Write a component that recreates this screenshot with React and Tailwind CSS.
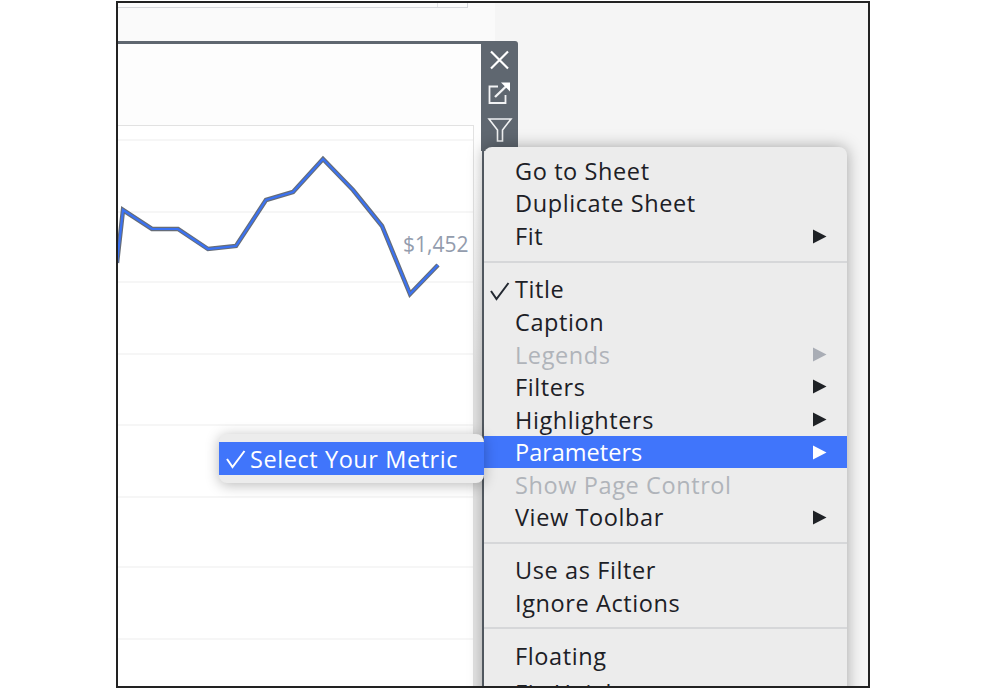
const pts = [[117,263],[123,210],[152,229],[178,229],[208,249],[236,246],[266,200],[293,192],[323,159],[353,190],[382,226],[410,294],[438,265]];
const line = pts.map(([x,y]) => `${x-118},${y-126}`).join(" ");
const grids = [140,212,282,354,425,497,567,639];

function Arrow({ color }) {
  return (
    <svg width="15" height="15" viewBox="0 0 15 15" className="shrink-0">
      <path d="M1 0.5 L14.5 7.5 L1 14.5 Z" fill={color} />
    </svg>
  );
}

function Check({ color = "#222831" }) {
  return (
    <svg width="22" height="20" viewBox="0 0 22 20" fill="none">
      <path d="M2 10 L7.5 18 L19.5 2" stroke={color} strokeWidth="2" />
    </svg>
  );
}

function Row({ label, arrow, checked, disabled, active, top = "pt-[2px]", spacing = "tracking-[0.6px]" }) {
  const tone = active ? "text-white" : disabled ? "text-[#b0b4ba]" : "text-[#1c2026]";
  const arrowColor = active ? "#ffffff" : disabled ? "#a9adb5" : "#1f2226";
  return (
    <div className={`relative flex h-[32.6px] items-center pl-[31px] pr-[20px] ${active ? "bg-[#4075fb]" : ""}`}>
      {checked && <span className="absolute left-[5px] top-[8px]"><Check /></span>}
      <span className={`flex-1 text-[23.5px] leading-none ${top} ${spacing} ${tone}`}>{label}</span>
      {arrow && <Arrow color={arrowColor} />}
    </div>
  );
}

function Sep({ after = "pb-[10px]" }) {
  return (
    <div className={`pt-[8px] ${after}`}>
      <div className="h-[2px] bg-[#d6d7d9]" />
    </div>
  );
}

export default function App() {
  return (
    <div className="h-[693px] w-[990px] overflow-hidden bg-white pl-[116px] pt-[1px] font-['Open_Sans',sans-serif]">
      <div className="relative flex h-[687px] w-[754px] overflow-hidden border-2 border-[#222222] bg-[#f5f5f5]">
        <div className="w-[377px] bg-[#fafafa]">
          <div className="flex h-[5px] w-[350px] justify-end border-b border-r border-[#d5d7db] bg-[#fcfcfc]">
            <div className="w-[30px] border-l border-[#e3e4e6]" />
          </div>
        </div>

        <div className="absolute left-0 top-[38px] flex h-[650px] w-[366px] flex-col border-r-2 border-t-[3px] border-[#5f6770] bg-linear-to-b from-[#fdfdfd] from-20% to-[#e4e4e4] to-50%">
          <div className="relative mr-[8px] mt-[81px] flex-1 border-r border-t border-[#e2e2e2] bg-white">
            <svg width="355" height="570" viewBox="0 0 355 570" className="block">
              {grids.map((y) => (
                <line key={y} x1="0" x2="355" y1={y-126} y2={y-126} stroke="#f3f3f3" strokeWidth="1.5" />
              ))}
              <polyline points={line} fill="none" stroke="#666d78" strokeWidth="4.5" strokeLinejoin="miter" />
              <polyline points={line} fill="none" stroke="#3b72f2" strokeWidth="2.2" strokeLinejoin="miter" />
            </svg>
            <span className="absolute left-[285px] top-[105px] text-[21px] leading-[26px] text-[#939cad]">$1,452</span>
          </div>
        </div>

        <div className="absolute left-[363px] top-[38px] flex h-[110px] w-[37px] flex-col items-center rounded-tr-[3px] bg-[#5f6770] pt-[7px]">
          <svg width="24" height="24" viewBox="0 0 24 24" fill="none" stroke="#ffffff" strokeWidth="2.2" className="-ml-[2px]">
            <path d="M4 3.5 L21 20.5 M21 3.5 L4 20.5" />
          </svg>
          <svg width="24" height="24" viewBox="0 0 24 24" fill="none" stroke="#f2f3f4" strokeWidth="1.8" className="-ml-[2px] mt-[9px]">
            <path d="M11 5.5 H2.5 V22 H18.5 V14" />
            <path d="M8 16 L20 4.5" strokeWidth="2.4" />
            <path d="M14 1.5 H23 V10.5 Z" fill="#ffffff" stroke="none" />
          </svg>
          <svg width="26" height="26" viewBox="0 0 26 26" fill="none" stroke="#f0f1f2" strokeWidth="1.6" className="mt-[12px]">
            <path d="M2 2 H24 L15.5 13 V24 H10.5 V13 Z" />
          </svg>
        </div>

        <div className="absolute left-[101px] top-[431px] z-20 w-[265px] rounded-[8px] bg-[#ececec] py-[8px] shadow-[0_2px_14px_rgba(0,0,0,0.28)]">
          <div className="relative flex h-[33px] items-center bg-[#4075fb] pl-[31px]">
            <span className="absolute left-[6px] top-[7px]"><Check color="#ffffff" /></span>
            <span className="whitespace-nowrap pt-[2px] text-[23.5px] leading-none tracking-[0.57px] text-white">Select Your Metric</span>
          </div>
        </div>

        <div className="absolute left-[366px] top-[144px] z-10 h-[600px] w-[363px] rounded-[8px] bg-[#ececec] pt-[8px] shadow-[0_0_16px_rgba(0,0,0,0.34)]">
          <Row label="Go to Sheet" top="pt-0" />
          <Row label="Duplicate Sheet" top="pt-0" />
          <Row label="Fit" arrow top="pt-0" />
          <Sep />
          <Row label="Title" checked />
          <Row label="Caption" />
          <Row label="Legends" arrow disabled />
          <Row label="Filters" arrow />
          <Row label="Highlighters" arrow />
          <Row label="Parameters" arrow active spacing="tracking-normal" />
          <Row label="Show Page Control" disabled />
          <Row label="View Toolbar" arrow />
          <Sep />
          <Row label="Use as Filter" />
          <Row label="Ignore Actions" />
          <Sep after="pb-[11px]" />
          <Row label="Floating" />
          <div className="mt-[4px]"><Row label="Fix Height" /></div>
        </div>
      </div>
    </div>
  );
}
